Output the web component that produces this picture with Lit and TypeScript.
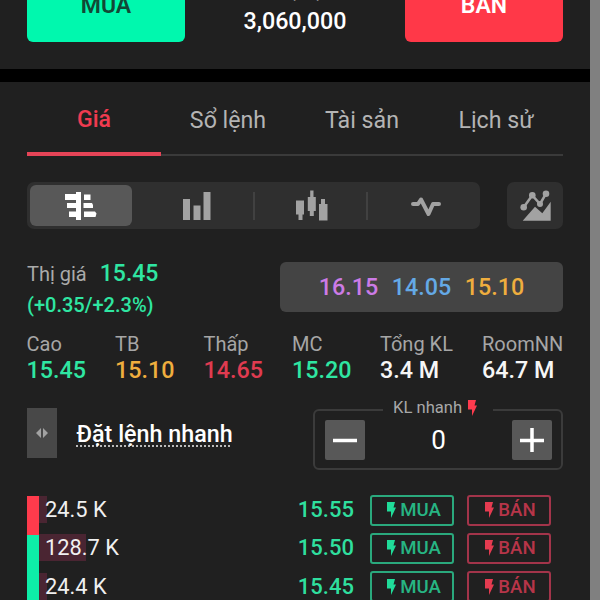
import { LitElement, html, css, svg } from 'lit';
import { customElement, property } from 'lit/decorators.js';

type Stat = { label: string; value: string; tone: string };
type Level = { volume: string; depth: number; price: string };

const STATS: Stat[] = [
    { label: 'Cao', value: '15.45', tone: 'up' },
    { label: 'TB', value: '15.10', tone: 'ref' },
    { label: 'Thấp', value: '14.65', tone: 'down' },
    { label: 'MC', value: '15.20', tone: 'up' },
    { label: 'Tổng KL', value: '3.4 M', tone: 'plain' },
    { label: 'RoomNN', value: '64.7 M', tone: 'plain' },
];

const LEVELS: Level[] = [
    { volume: '24.5 K', depth: 8, price: '15.55' },
    { volume: '128.7 K', depth: 47, price: '15.50' },
    { volume: '24.4 K', depth: 8, price: '15.45' },
];

const ICONS = {
    depth: svg`
        <path d="M0 4h12v6H0zM2 13h10v5H2zM4 21.5h8v5.5H4zM19 4.5h6.5V10H19zM18.5 13h8.5l1 2v3h-9.5zM19 21.5h11l1.5 2-1 3.5H19z" />
        <path d="M11 2h5v28h-5z" />
    `,
    bars: svg`<path d="M2 9h7v21H2zM12.5 15.5h7V30h-7zM22.5 2h7v28h-7z" />`,
    candles: svg`
        <path d="M1 10.5h8v14H7.5V30h-4v-5.5H1z" />
        <path d="M15.2.5h3.3V7h2.3v14h-2v5h-4v-5h-2V7h2.4z" />
        <path d="M26 9h4v5h2.5v16.5H24V14h2z" />
    `,
    pulse: svg`<path class="stroke" d="M5 14h5l3-4.5 7.5 14.5L25 14h6" />`,
    trend: svg`
        <path d="m3.7 30.7 12.3-14 7.3 6.6 8.4-11.6v19z" />
        <path class="thin" d="m4.7 17.3 8.6-12L21 14l6-10.3" />
        <circle cx="4.7" cy="17.3" r="3.3" /><circle cx="13.3" cy="5.3" r="3.3" />
        <circle cx="21" cy="14" r="3" /><circle cx="27" cy="3.7" r="3.3" />
    `,
};

@customElement('bolt-icon')
export class BoltIcon extends LitElement {
    static styles = css`
        :host {
            display: block;
            width: 9px;
            height: 16px;
        }

        svg {
            display: block;
            width: 100%;
            height: 100%;
            fill: currentColor;
        }
    `;

    render() {
        return html`<svg viewBox="0 0 9 16"><path d="M0 0h8L6.5 5.5H9L4 16V9.5H0z" /></svg>`;
    }
}

@customElement('price-level')
export class PriceLevel extends LitElement {
    @property({ attribute: false })
    level!: Level;

    static styles = css`
        :host {
            display: flex;
            align-items: flex-start;
            height: 38.4px;
        }

        .volume {
            position: relative;
            box-sizing: border-box;
            width: 241px;
            padding-left: 6px;
            font-size: 21.8px;
            line-height: 28px;
            color: #f0f0f0;
        }

        .bar {
            position: absolute;
            left: 0;
            top: 0;
            height: 27px;
            background: #4a2532;
        }

        .volume span {
            position: relative;
        }

        .price {
            width: 74px;
            text-align: right;
            font-size: 22px;
            line-height: 28px;
            font-weight: 500;
            color: #2fdf9e;
        }

        .order {
            display: flex;
            align-items: center;
            justify-content: center;
            gap: 4px;
            box-sizing: border-box;
            width: 84px;
            height: 31px;
            margin: -1.5px 0 0 16px;
            padding-left: 4px;
            border: 2px solid #2aa97d;
            border-radius: 3px;
            font-size: 18.6px;
            line-height: 28px;
            font-weight: 500;
            color: #27b583;
        }

        .order bolt-icon {
            color: #20dc99;
        }

        .sell {
            margin-left: 12.5px;
            border-color: #a3344a;
            color: #b73549;
        }

        .sell bolt-icon {
            color: #e53b50;
        }
    `;

    render() {
        const { volume, depth, price } = this.level;

        return html`
            <div class="volume">
                <div class="bar" style="width: ${depth}px"></div>
                <span>${volume}</span>
            </div>
            <div class="price">${price}</div>
            <div class="order"><bolt-icon></bolt-icon>MUA</div>
            <div class="order sell"><bolt-icon></bolt-icon>BÁN</div>
        `;
    }
}

@customElement('app-root')
export class AppRoot extends LitElement {
    static styles = css`
        :host {
            display: flex;
            width: 600px;
            height: 600px;
            overflow: hidden;
            background: #808080;
            font-family: Roboto, sans-serif;
            color: #fff;
        }

        .panel {
            display: flex;
            flex-direction: column;
            box-sizing: border-box;
            width: 590px;
            height: 600px;
            overflow: hidden;
            background: #202020;
        }

        .panel > * {
            flex-shrink: 0;
            box-sizing: border-box;
        }

        .header {
            display: flex;
            justify-content: space-between;
            align-items: flex-end;
            height: 69px;
            padding: 0 27px 27px;
        }

        .trade {
            box-sizing: border-box;
            width: 158px;
            height: 74px;
            padding-top: 25px;
            border-radius: 6px;
            background: #00f8ae;
            color: #124836;
            font-size: 23px;
            line-height: 26px;
            font-weight: 600;
            text-align: center;
        }

        .trade.sell {
            background: #ff3848;
            color: #fff;
        }

        .power {
            margin-bottom: 7px;
            font-size: 23.3px;
            line-height: 27px;
            font-weight: 500;
            text-align: center;
        }

        .power .label {
            margin-bottom: 5px;
            font-size: 16px;
            line-height: 20px;
            font-weight: 400;
            color: #aaa;
        }

        .divider {
            height: 13px;
            background: #000;
        }

        .tabs {
            display: flex;
            height: 74px;
            margin: 0 27px;
        }

        .tab {
            flex: 1;
            box-sizing: border-box;
            height: 74px;
            padding-top: 23px;
            border-bottom: 2px solid #3a3a3a;
            color: #b4b4b4;
            font-size: 23.2px;
            line-height: 30px;
            text-align: center;
        }

        .tab.active {
            border-bottom: 4px solid #e54457;
            color: #f03b50;
            font-size: 23px;
            font-weight: 500;
        }

        .tools {
            display: flex;
            justify-content: space-between;
            height: 47px;
            margin: 26px 27px 0;
        }

        .modes {
            display: flex;
            align-items: center;
            box-sizing: border-box;
            width: 453px;
            padding: 3px 0 3px 3px;
            border-radius: 7px;
            background: #2f2f2f;
        }

        .mode {
            display: flex;
            align-items: center;
            justify-content: center;
            flex: 1;
            height: 41px;
            border-radius: 6px;
        }

        .mode.active {
            flex: 0 0 102px;
            margin-right: 9px;
            background: #585858;
        }

        .rule {
            width: 2px;
            height: 28px;
            background: #414141;
        }

        .extra {
            display: flex;
            align-items: center;
            justify-content: center;
            width: 56px;
            border-radius: 7px;
            background: #2f2f2f;
        }

        .icon {
            display: block;
            overflow: visible;
            fill: #a2a2a2;
        }

        .active .icon {
            fill: #fff;
        }

        .icon .stroke,
        .icon .thin {
            fill: none;
            stroke: #a2a2a2;
            stroke-width: 4;
            stroke-linecap: round;
            stroke-linejoin: round;
        }

        .icon .thin {
            stroke-width: 2.5;
        }

        .quote {
            display: flex;
            justify-content: space-between;
            height: 66px;
            margin: 30px 27px 0;
        }

        .market {
            display: flex;
            align-items: baseline;
            gap: 13px;
            padding-top: 1px;
            line-height: 28px;
            font-size: 20px;
            color: #aaa;
        }

        .market b {
            font-size: 23px;
            font-weight: 500;
        }

        .change {
            font-size: 20px;
            line-height: 35px;
            font-weight: 500;
        }

        .range {
            display: flex;
            align-items: center;
            justify-content: center;
            gap: 13.5px;
            box-sizing: border-box;
            width: 283px;
            height: 50px;
            margin-top: 3px;
            border-radius: 6px;
            background: #444;
            font-size: 23.3px;
            font-weight: 500;
        }

        .up {
            color: #2fe6a2;
        }

        .ref {
            color: #efae3e;
        }

        .down {
            color: #e03b50;
        }

        .ceil {
            color: #cc7be6;
        }

        .floor {
            color: #64a9e6;
        }

        .stats {
            display: grid;
            grid-template-columns: 88.5px 88.5px 88.5px 88px 102px 90px;
            height: 58px;
            margin: 6px 17px 0 26.5px;
        }

        .stat {
            line-height: 26px;
            font-size: 20px;
            color: #a6a6a6;
            white-space: nowrap;
        }

        .stat .value {
            font-size: 23.3px;
            line-height: 27px;
            font-weight: 500;
        }

        .plain {
            color: #f6f6f6;
        }

        .quick {
            display: flex;
            align-items: flex-start;
            height: 88px;
            margin: 19px 27px 0;
        }

        .handle {
            display: flex;
            align-items: center;
            justify-content: center;
            width: 30px;
            height: 50px;
            background: #484848;
        }

        .title {
            margin: 12px 0 0 19.5px;
            height: 28px;
            font-size: 23.3px;
            line-height: 28px;
            font-weight: 500;
            white-space: nowrap;
            text-decoration: underline dotted #bbb 2px;
            text-underline-offset: 3px;
            text-decoration-skip-ink: none;
        }

        .stepper {
            position: relative;
            display: flex;
            align-items: center;
            justify-content: space-between;
            box-sizing: border-box;
            width: 250px;
            height: 61px;
            margin: 1px 0 0 auto;
            padding: 0 9px 0 10px;
            border: 2px solid #3b3b3b;
            border-radius: 6px;
            font-size: 26px;
        }

        .legend {
            position: absolute;
            left: 68px;
            top: -16px;
            display: flex;
            align-items: center;
            gap: 6px;
            padding: 0 16px 0 10px;
            background: #202020;
            color: #a8a8a8;
            font-size: 16.6px;
            line-height: 26px;
            white-space: nowrap;
        }

        .legend bolt-icon {
            color: #ff3b4e;
        }

        .step {
            width: 40px;
            height: 40px;
            border-radius: 2px;
            background: #585858;
        }

        .step svg {
            display: block;
            stroke: #fff;
            stroke-width: 3.5;
        }

        .book {
            display: flex;
            height: 120px;
            margin: 0 27px;
        }

        .ratio {
            display: flex;
            flex-direction: column;
            width: 12px;
        }

        .ratio .asks {
            height: 39px;
            background: #ff3b4c;
        }

        .ratio .bids {
            flex: 1;
            background: #0eeea8;
        }
    `;

    private _icon(name: keyof typeof ICONS) {
        return html`
            <svg class="icon" width="32" height="32" viewBox="0 0 32 32">${ICONS[name]}</svg>
        `;
    }

    render() {
        return html`
            <div class="panel">
                <div class="header">
                    <div class="trade">MUA</div>
                    <div class="power">
                        <div class="label">KL tự đặt</div>
                        <div>3,060,000</div>
                    </div>
                    <div class="trade sell">BÁN</div>
                </div>
                <div class="divider"></div>
                <div class="tabs">
                    <div class="tab active">Giá</div>
                    <div class="tab">Sổ lệnh</div>
                    <div class="tab">Tài sản</div>
                    <div class="tab">Lịch sử</div>
                </div>
                <div class="tools">
                    <div class="modes">
                        <div class="mode active">${this._icon('depth')}</div>
                        <div class="mode">${this._icon('bars')}</div>
                        <div class="rule"></div>
                        <div class="mode">${this._icon('candles')}</div>
                        <div class="rule"></div>
                        <div class="mode">${this._icon('pulse')}</div>
                    </div>
                    <div class="extra">${this._icon('trend')}</div>
                </div>
                <div class="quote">
                    <div>
                        <div class="market">Thị giá <b class="up">15.45</b></div>
                        <div class="change up">(+0.35/+2.3%)</div>
                    </div>
                    <div class="range">
                        <span class="ceil">16.15</span>
                        <span class="floor">14.05</span>
                        <span class="ref">15.10</span>
                    </div>
                </div>
                <div class="stats">
                    ${STATS.map(s => html`
                        <div class="stat">${s.label}<div class="value ${s.tone}">${s.value}</div></div>
                    `)}
                </div>
                <div class="quick">
                    <div class="handle">
                        <svg class="icon" width="12" height="10" viewBox="0 0 12 10">
                            <path d="M0 5 5 0v10zM12 5 7 0v10z" />
                        </svg>
                    </div>
                    <div class="title">Đặt lệnh nhanh</div>
                    <div class="stepper">
                        <div class="legend">KL nhanh<bolt-icon></bolt-icon></div>
                        <div class="step">
                            <svg width="40" height="40"><path d="M8 20.5h24" /></svg>
                        </div>
                        <div>0</div>
                        <div class="step">
                            <svg width="40" height="40"><path d="M8 20.5h24M20 8v24" /></svg>
                        </div>
                    </div>
                </div>
                <div class="book">
                    <div class="ratio">
                        <div class="asks"></div>
                        <div class="bids"></div>
                    </div>
                    <div>
                        ${LEVELS.map(level => html`<price-level .level=${level}></price-level>`)}
                    </div>
                </div>
            </div>
        `;
    }
}
